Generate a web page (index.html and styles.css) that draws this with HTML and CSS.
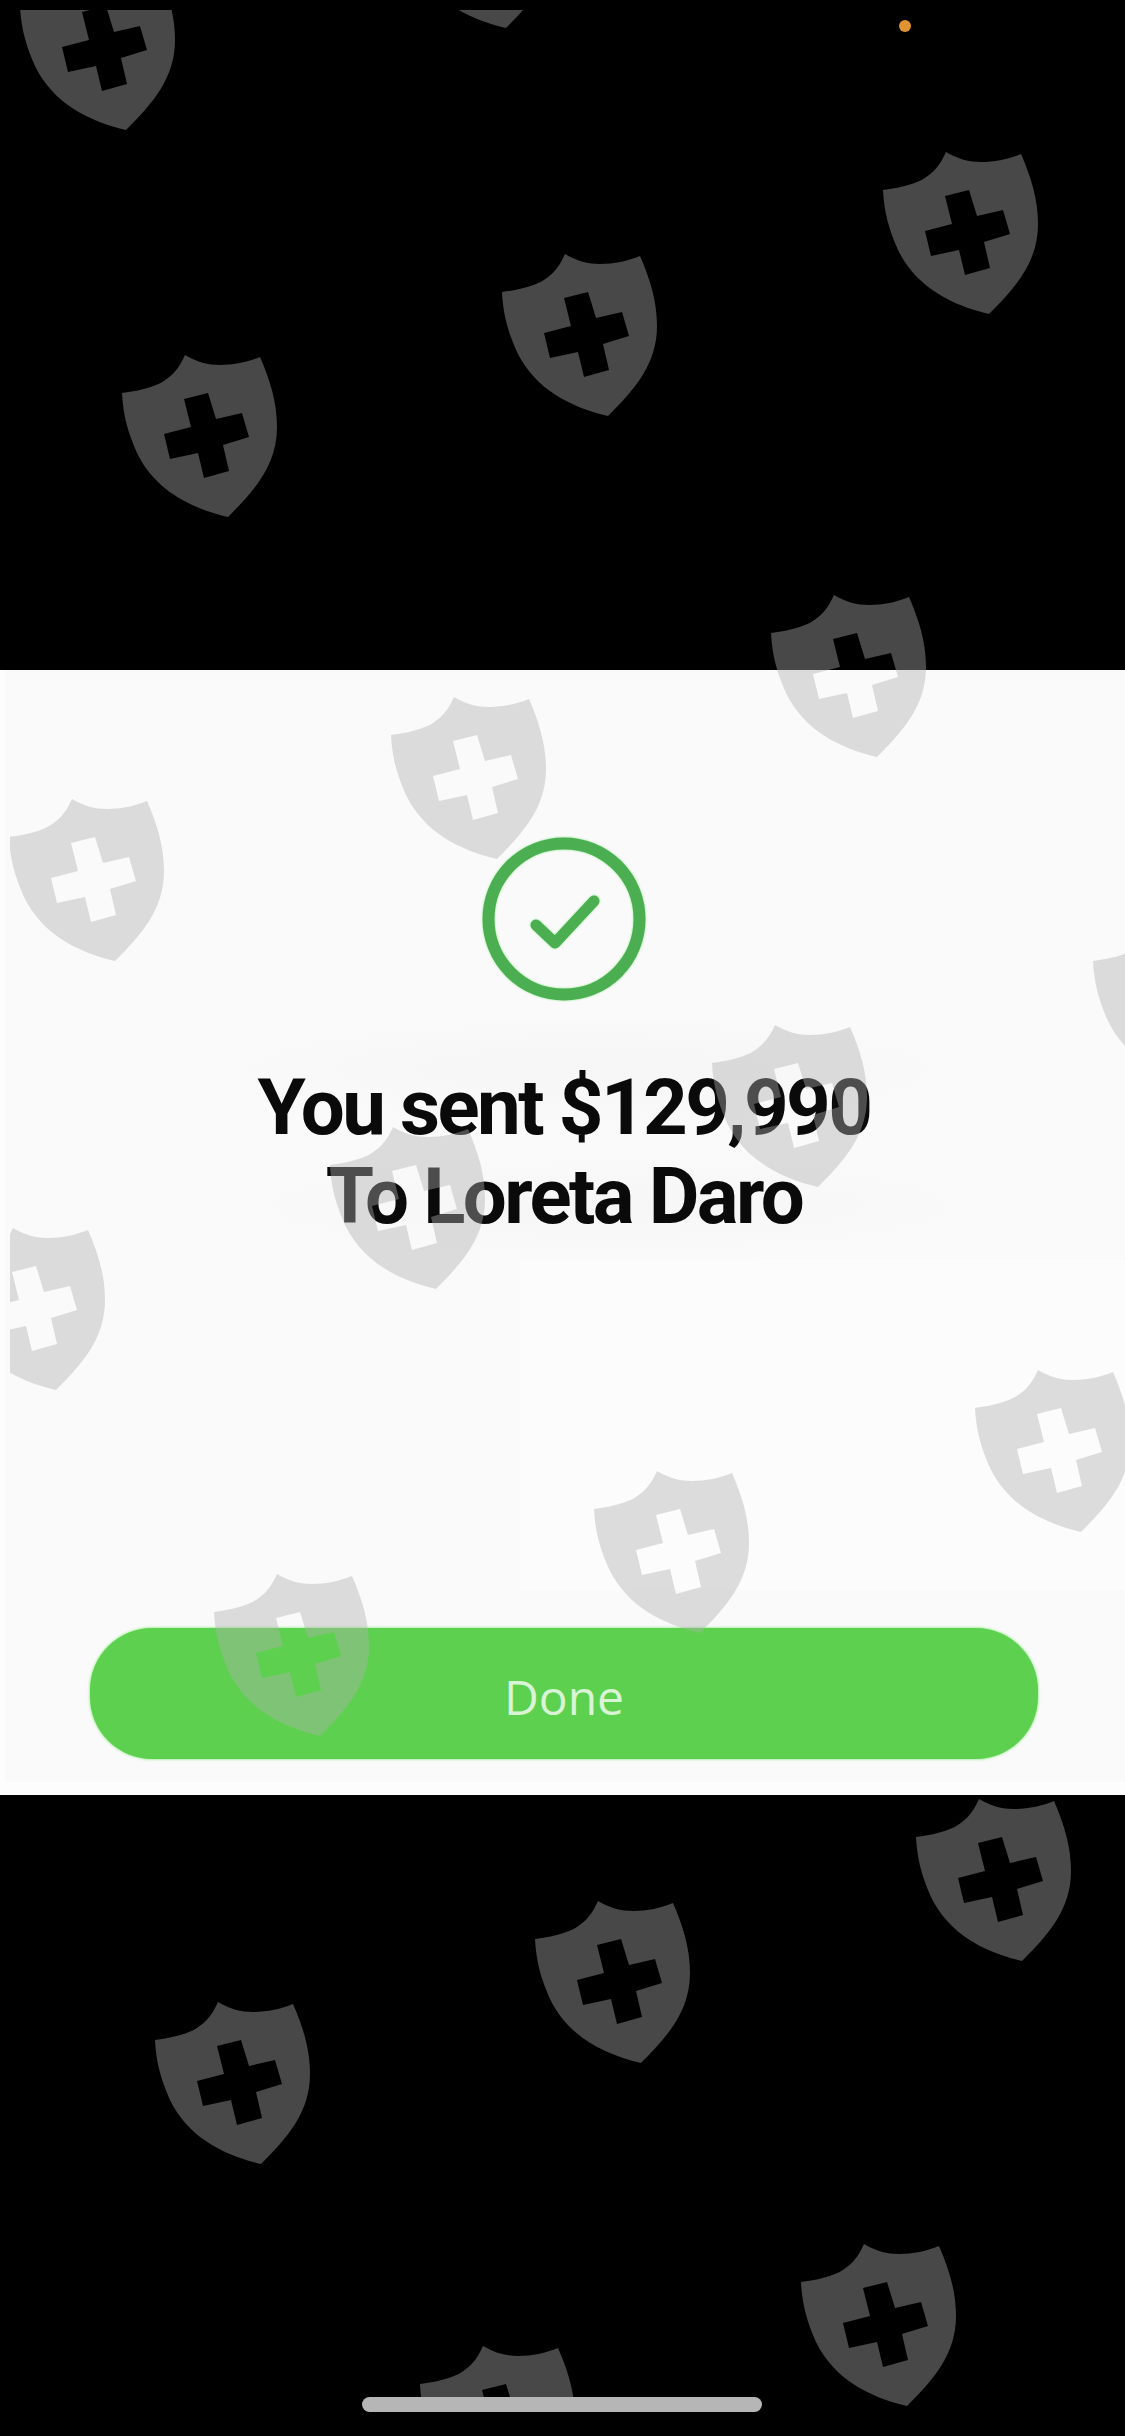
FILE: index.html
```html
<!DOCTYPE html>
<html lang="en">
<head>
<meta charset="utf-8">
<title>Payment sent</title>
<link rel="stylesheet" href="styles.css">
</head>
<body>
<main class="screen">
  <span class="privacy-dot"></span>
  <section class="receipt">
    <svg class="check" viewBox="0 0 164 164" aria-hidden="true">
      <circle cx="82" cy="82" r="75.5"></circle>
      <path d="M54 88 L73 106 L112 64"></path>
    </svg>
    <h1 class="message">You sent $129,990<br>To Loreta Daro</h1>
    <button class="done" type="button">Done</button>
  </section>
  <svg class="watermark" viewBox="10 10 1115 2402" aria-hidden="true">
    <defs>
      <path id="shield" fill-rule="evenodd" d="M85 15 C97 22 108 25 120 25 C134 25 148 22 160 17 C170 40 177 62 177 87 C177 125 155 150 128 177 C90 168 55 150 37 113 C28 93 23 75 22 53 C45 50 60 45 68 38 C76 32 81 24 85 15 Z M84 59 L108 53 L116 79 L142 73 L149 97 L123 105 L129 131 L104 138 L98 113 L70 119 L64 94 L91 87 Z"></path>
    </defs>
    <use href="#shield" x="-2" y="-47"></use>
    <use href="#shield" x="378" y="-149"></use>
    <use href="#shield" x="100" y="340"></use>
    <use href="#shield" x="480" y="239"></use>
    <use href="#shield" x="861" y="137"></use>
    <use href="#shield" x="-13" y="784"></use>
    <use href="#shield" x="369" y="682"></use>
    <use href="#shield" x="749" y="580"></use>
    <use href="#shield" x="-72" y="1213"></use>
    <use href="#shield" x="308" y="1112"></use>
    <use href="#shield" x="690" y="1010"></use>
    <use href="#shield" x="1071" y="908"></use>
    <use href="#shield" x="192" y="1559"></use>
    <use href="#shield" x="572" y="1456"></use>
    <use href="#shield" x="953" y="1355"></use>
    <use href="#shield" x="133" y="1987"></use>
    <use href="#shield" x="513" y="1886"></use>
    <use href="#shield" x="894" y="1784"></use>
    <use href="#shield" x="398" y="2331"></use>
    <use href="#shield" x="779" y="2229"></use>
  </svg>
  <span class="home-bar"></span>
</main>
</body>
</html>
```
FILE: styles.css
```css
* { box-sizing: border-box; }

html, body {
  margin: 0;
  background: #000;
}

.screen {
  position: relative;
  width: 1125px;
  height: 2436px;
  padding-top: 670px;
  overflow: hidden;
  background: #000;
}

.receipt {
  display: flex;
  flex-direction: column;
  align-items: center;
  width: 1125px;
  height: 1125px;
  padding: 167px 0 0 3px;
  background:
    linear-gradient(#fdfdfd, #fdfdfd) left top / 5px 100% no-repeat,
    linear-gradient(#fdfdfd, #fdfdfd) left bottom / 100% 13px no-repeat,
    radial-gradient(closest-side, #f6f6f6, #fafafa00) 150px 340px / 880px 120px no-repeat,
    radial-gradient(closest-side, #f6f6f6, #fafafa00) 170px 480px / 880px 110px no-repeat,
    linear-gradient(#fcfcfc, #fcfcfc) 520px 590px / 605px 330px no-repeat,
    #fafafa;
}

.check {
  display: block;
  width: 164px;
  height: 164px;
  flex: none;
  filter: drop-shadow(0 0 1px #8ee88e);
}

.check circle,
.check path {
  fill: none;
  stroke: #4bae50;
}

.check circle { stroke-width: 12; }

.check path {
  stroke-width: 11;
  stroke-linecap: round;
  stroke-linejoin: round;
}

.message {
  margin: 62px 0 0;
  color: #0a0a0a;
  font: 700 78px/89px Roboto, "Liberation Sans", sans-serif;
  letter-spacing: -2.6px;
  text-align: center;
}

.done {
  display: block;
  width: 948px;
  height: 131px;
  margin-top: 387px;
  padding: 6px 0 0;
  border: 0;
  border-radius: 62px;
  background: #5dd14f;
  box-shadow: 0 0 3px #6be85f;
  color: #d9f5d5;
  font: 500 48px/1 "Open Sans", sans-serif;
}

.watermark {
  position: absolute;
  left: 10px;
  top: 10px;
  width: 1115px;
  height: 2402px;
  fill: rgba(176, 176, 176, 0.41);
}

.privacy-dot {
  position: absolute;
  left: 899px;
  top: 20px;
  width: 12px;
  height: 12px;
  border-radius: 50%;
  background: #e09433;
}

.home-bar {
  position: absolute;
  left: 362px;
  top: 2397px;
  width: 400px;
  height: 15px;
  border-radius: 8px;
  background: #b6b6b6;
}
```
